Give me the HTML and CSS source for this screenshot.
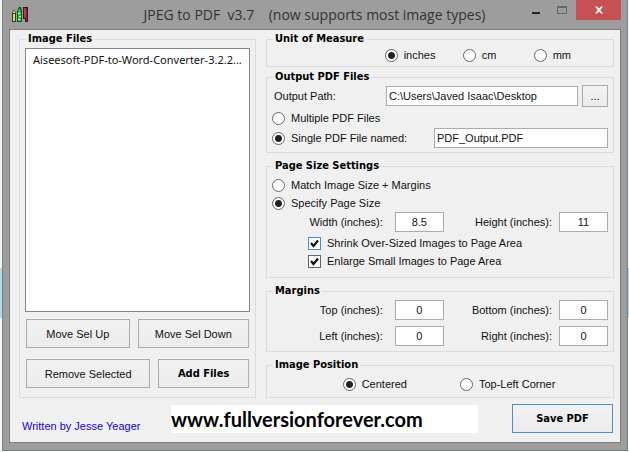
FILE: index.html
```html
<!DOCTYPE html>
<html lang="en">
<head>
<meta charset="utf-8">
<meta name="viewport" content="width=device-width, initial-scale=1">
<title>JPEG to PDF v3.7</title>
<link rel="stylesheet" href="styles.css">
</head>
<body>
<main class="window">
  <header class="titlebar">
    <svg class="app-icon" viewBox="0 0 16 16" aria-hidden="true">
      <path d="M0 15V6l2-4 2 4v9z" fill="#3c3a1c"/>
      <path d="M1 14V7h2v7z" fill="#d8cf8c"/>
      <path d="M1 6l1-3 1 3z" fill="#fff6d8"/>
      <path d="M5 15V4l2-4h2l1 4v11z" fill="#0a5a1c"/>
      <path d="M6 14V5l1-3h1l1 3v9z" fill="#22c940"/>
      <path d="M6 6h2v1H6zM7 9h2v1H7zM6 12h2v1H6z" fill="#b8ffc0"/>
      <path d="M11 0h5v15h-3v-3h-2z" fill="#4e0c22"/>
      <path d="M12 1h2v10h-2z" fill="#b43a5c"/>
      <path d="M14 3h1v11h-1z" fill="#84203e"/>
    </svg>
    <h1 class="title">JPEG to PDF&nbsp; v3.7 &nbsp;&nbsp; (now supports most image types)</h1>
    <div class="caption-buttons">
      <button class="caption" type="button" aria-label="Minimize"><svg viewBox="0 0 10 10"><path d="M1 7h8v2H1z" fill="#222"/></svg></button>
      <button class="caption" type="button" aria-label="Maximize"><svg viewBox="0 0 10 10"><path d="M0 1h10v8H0zM1 3v5h8V3z" fill="#666" fill-rule="evenodd"/></svg></button>
      <button class="caption caption-close" type="button" aria-label="Close"><svg viewBox="0 0 10 10"><path d="M1 1.500h2l2 2 2-2h2L6.200 5 9 8.500H7l-2-2-2 2H1L3.800 5z" fill="#fff"/></svg></button>
    </div>
  </header>

  <form class="client">
    <div class="columns">
      <fieldset class="group files">
        <legend>Image Files</legend>
        <select class="file-list" size="2" aria-label="Image files">
          <option>Aiseesoft-PDF-to-Word-Converter-3.2.2...</option>
        </select>
        <div class="buttons">
          <button class="btn move-up" type="button">Move Sel Up</button>
          <button class="btn move-down" type="button">Move Sel Down</button>
        </div>
        <div class="buttons">
          <button class="btn remove" type="button">Remove Selected</button>
          <button class="btn add strong" type="button">Add Files</button>
        </div>
      </fieldset>

      <div class="settings">
        <fieldset class="group unit">
          <legend>Unit of Measure</legend>
          <div class="unit-row">
            <label class="choice"><input type="radio" name="unit" checked>inches</label>
            <label class="choice"><input type="radio" name="unit">cm</label>
            <label class="choice"><input type="radio" name="unit">mm</label>
          </div>
        </fieldset>

        <fieldset class="group output">
          <legend>Output PDF Files</legend>
          <div class="row path-row">
            <label class="path-label" for="path">Output Path:</label>
            <input class="field path" id="path" type="text" value="C:\Users\Javed Isaac\Desktop">
            <button class="btn browse" type="button" aria-label="Browse">...</button>
          </div>
          <div class="row"><label class="choice"><input type="radio" name="mode">Multiple PDF Files</label></div>
          <div class="row name-row">
            <label class="choice"><input type="radio" name="mode" checked>Single PDF File named:</label>
            <input class="field name" type="text" value="PDF_Output.PDF" aria-label="PDF file name">
          </div>
        </fieldset>

        <fieldset class="group page">
          <legend>Page Size Settings</legend>
          <div class="row"><label class="choice"><input type="radio" name="size">Match Image Size + Margins</label></div>
          <div class="row"><label class="choice"><input type="radio" name="size" checked>Specify Page Size</label></div>
          <div class="numbers">
            <label for="width">Width (inches):</label><input class="field" id="width" type="text" value="8.5">
            <label for="height">Height (inches):</label><input class="field" id="height" type="text" value="11">
          </div>
          <div class="fit">
            <label class="choice"><span class="check active"><input type="checkbox" checked><svg viewBox="0 0 13 13"><path d="M3 6l2.500 3L10 3.500" fill="none" stroke="#111" stroke-width="2.200"/></svg></span>Shrink Over-Sized Images to Page Area</label>
            <label class="choice"><span class="check"><input type="checkbox" checked><svg viewBox="0 0 13 13"><path d="M3 6l2.500 3L10 3.500" fill="none" stroke="#111" stroke-width="2.200"/></svg></span>Enlarge Small Images to Page Area</label>
          </div>
        </fieldset>

        <fieldset class="group margins">
          <legend>Margins</legend>
          <div class="numbers">
            <label for="top">Top (inches):</label><input class="field" id="top" type="text" value="0">
            <label for="bottom">Bottom (inches):</label><input class="field" id="bottom" type="text" value="0">
            <label for="left">Left (inches):</label><input class="field" id="left" type="text" value="0">
            <label for="right">Right (inches):</label><input class="field" id="right" type="text" value="0">
          </div>
        </fieldset>

        <fieldset class="group position">
          <legend>Image Position</legend>
          <div class="row position-row">
            <label class="choice"><input type="radio" name="position" checked>Centered</label>
            <label class="choice"><input type="radio" name="position">Top-Left Corner</label>
          </div>
        </fieldset>
      </div>
    </div>

    <footer class="footer">
      <a class="credit" href="#">Written by Jesse Yeager</a>
      <div class="banner">www.fullversionforever.com</div>
      <button class="btn save strong" type="button">Save PDF</button>
    </footer>
  </form>
</main>
</body>
</html>
```
FILE: styles.css
```css
* {
  box-sizing: border-box;
}

body {
  margin: 0;
  min-height: 100vh;
  padding: 0 1px 1px 2px;
  background: linear-gradient(#eef6f8 0 268px, #aedbe8 268px 318px, #f4f8f8 318px);
  color: #111;
  font: 11px/14px "Liberation Sans", Arial, sans-serif;
}

button,
input,
select {
  margin: 0;
  font: inherit;
  color: inherit;
}

.window {
  padding: 0 6px 7px;
  border: 1px solid #808080;
  border-top: 0;
  background: #9d9d9d;
}

/* Title bar */
.titlebar {
  display: flex;
  height: 29px;
  align-items: center;
}

.app-icon {
  width: 16px;
  height: 16px;
  margin-left: 3px;
}

.title {
  flex: 1;
  margin: 0;
  padding-left: 78px;
  text-align: center;
  white-space: nowrap;
  font: 14px/28px "Open Sans", "Noto Sans", sans-serif;
  color: #333;
}

.caption-buttons {
  display: flex;
  align-self: flex-start;
}

.caption {
  display: grid;
  place-items: center;
  width: 26px;
  height: 20px;
  padding: 0;
  border: 0;
  background: transparent;
}

.caption svg {
  width: 10px;
  height: 10px;
}

.caption-close {
  width: 45px;
  margin-left: 1px;
  background: #c75050;
}

/* Client area */
.client {
  padding: 2px 6px 9px 9px;
  border: 1px solid #808080;
  background: #f0f0f0;
}

.columns {
  display: grid;
  grid-template-columns: 237fr 348fr;
  gap: 10px;
}

.group {
  min-width: 0;
  margin: 0;
  padding: 0 5px;
  border: 1px solid #dcdcdc;
}

.group legend {
  margin-left: 1px;
  padding: 0 2px;
  font: bold 11px/14px "DejaVu Sans Condensed", "Noto Sans", sans-serif;
  color: #000;
}

.files {
  padding-bottom: 9px;
}

.settings {
  min-width: 0;
}

.settings .group {
  margin-bottom: 6px;
}

.settings .unit {
  margin-bottom: 3px;
}

.settings .position {
  margin-bottom: 0;
}

/* File list and its buttons */
.file-list {
  display: block;
  appearance: none;
  width: 100%;
  height: 264px;
  margin-top: 2px;
  padding: 3px 5px;
  overflow: hidden;
  border: 1px solid #828790;
  border-radius: 0;
  background: #fff;
}

.file-list option {
  padding: 0 2px;
  font: 11px/14px "Noto Sans", "Open Sans", sans-serif;
}

.buttons {
  display: flex;
  gap: 8px;
  margin-top: 7px;
  padding: 0 1px;
}

.buttons + .buttons {
  margin-top: 11px;
}

.btn {
  height: 29px;
  padding: 0;
  border: 1px solid #acacac;
  background: linear-gradient(#f2f2f2, #ebebeb);
}

.strong {
  font: bold 11px/14px "DejaVu Sans Condensed", "Noto Sans", sans-serif;
  color: #000;
}

.move-up { flex: 103; }
.move-down { flex: 111; }
.remove { flex: 124; }
.add { flex: 90; }

/* Rows and controls */
.row {
  display: flex;
  height: 20px;
  align-items: center;
}

.choice {
  display: flex;
  align-items: center;
  gap: 6px;
  white-space: nowrap;
}

input[type="radio"] {
  appearance: none;
  width: 13px;
  height: 13px;
  border: 1px solid #666;
  border-radius: 50%;
  background: #fff;
}

input[type="radio"]:checked {
  background: radial-gradient(circle, #222 0 3px, #fff 4px);
}

.check {
  display: grid;
  width: 13px;
  height: 13px;
}

.check input,
.check svg {
  grid-area: 1 / 1;
  width: 13px;
  height: 13px;
}

.check input {
  appearance: none;
  border: 1px solid #666;
  background: #fff;
}

.check.active input {
  border-color: #3c8fdb;
}

.check svg {
  pointer-events: none;
}

.field {
  min-width: 0;
  height: 20px;
  padding: 0 2px;
  border: 1px solid #ababab;
  border-radius: 0;
  background: #fff;
}

.unit {
  padding-bottom: 2px;
}

.unit-row {
  display: grid;
  grid-template-columns: 78px 71px auto;
  justify-content: end;
  align-items: center;
  height: 18px;
  padding-right: 37px;
}

.output {
  padding-bottom: 4px;
}

.path-row {
  height: 24px;
  gap: 4px;
}

.path-label {
  width: 110px;
  padding-left: 2px;
}

.path {
  flex: 1;
}

.browse {
  width: 26px;
  height: 22px;
}

.name-row {
  justify-content: space-between;
}

.name {
  width: 174px;
}

.page {
  padding-top: 3px;
  padding-bottom: 7px;
}

.page .row {
  height: 18px;
}

.numbers {
  display: grid;
  grid-template-columns: 16fr 49px 15fr 49px;
  row-gap: 6px;
  align-items: center;
  text-align: right;
}

.numbers label {
  padding-right: 7px;
}

.numbers label:nth-of-type(odd) {
  padding-right: 12px;
}

.numbers .field {
  text-align: center;
}

.fit {
  padding: 2px 0 0 36px;
}

.fit .choice {
  height: 18px;
}

.margins {
  padding-top: 2px;
  padding-bottom: 5px;
}

.position {
  padding-top: 2px;
  padding-bottom: 3px;
}

.position-row {
  justify-content: center;
  gap: 53px;
  padding-left: 18px;
}

/* Footer */
.footer {
  display: flex;
  align-items: center;
  margin-top: 6px;
  padding-left: 3px;
}

.credit {
  width: 149px;
  padding-top: 14px;
  color: #1500e0;
  text-decoration: none;
}

.banner {
  flex: 1;
  margin-right: 34px;
  background: #fff;
  font: bold 20px/28px Lato, "Open Sans", sans-serif;
  color: #000;
}

.save {
  width: 101px;
  margin-right: 1px;
  border-color: #4a90d0;
}
```
